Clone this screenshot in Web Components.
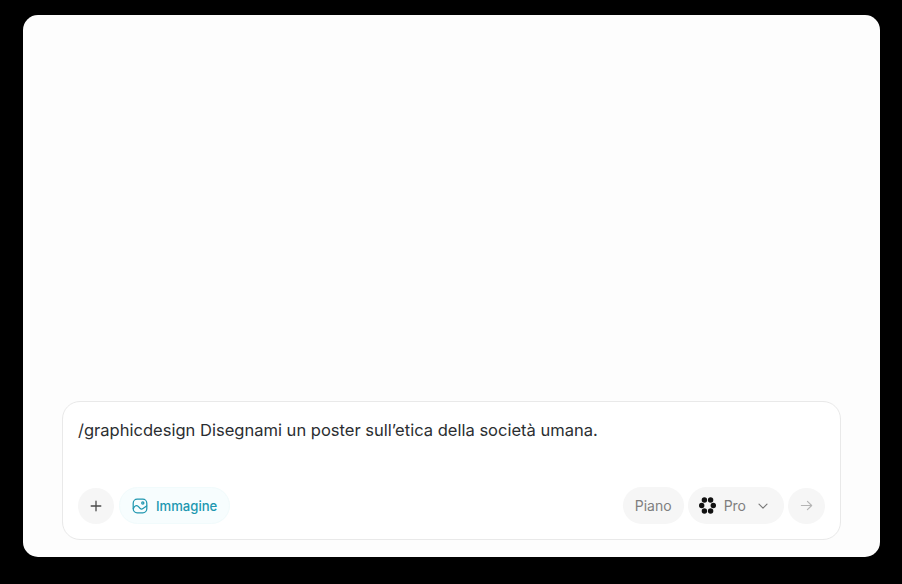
<!DOCTYPE html>
<html lang="it">
<head>
<meta charset="utf-8">
<title>Composer</title>
<style>
html,body{margin:0;height:100%;background:#000}
body{font-family:Inter,"Noto Sans",sans-serif}
</style>
</head>
<body>
<app-frame>
  <prompt-box>
    <span slot="text">/graphicdesign Disegnami un poster sull’etica della società umana.</span>
    <round-btn slot="left" style="--c:#4a4a4a"><svg viewBox="0 0 16 16" width="16" height="16" fill="none" stroke="currentColor" stroke-width="1.3" stroke-linecap="round"><path d="M8 3.2v9.6M3.2 8h9.6"/></svg></round-btn>
    <pill-btn slot="left" tone="accent">
      <svg slot="icon" viewBox="0 0 16 16" width="16" height="16" fill="none" stroke="currentColor" stroke-width="1.25" stroke-linecap="round" stroke-linejoin="round"><rect x="1.2" y="1.2" width="13.6" height="13.6" rx="4"/><circle cx="10.8" cy="5" r="1.1"/><path d="M1.4 10.6c1.4-3 3.2-3.8 4.8-2.2l1.8 1.9c1 1 2 1 3 .2l3.6-2.6"/></svg>
      Immagine
    </pill-btn>
    <pill-btn slot="right">Piano</pill-btn>
    <pill-btn slot="right" tone="menu">
      <svg slot="icon" viewBox="0 0 17 17" width="17" height="17" fill="#111"><circle cx="5.4" cy="3" r="2.7"/><circle cx="11.6" cy="3" r="2.7"/><circle cx="14.3" cy="8.5" r="2.7"/><circle cx="11.6" cy="14" r="2.7"/><circle cx="5.4" cy="14" r="2.7"/><circle cx="2.7" cy="8.5" r="2.7"/></svg>
      Pro
      <svg slot="end" viewBox="0 0 12 12" width="12" height="12" fill="none" stroke="#777" stroke-width="1.1" stroke-linecap="round" stroke-linejoin="round"><path d="M2 4.2 6 8.2l4-4"/></svg>
    </pill-btn>
    <round-btn slot="right" style="--c:#b4b4b4;--w:37px"><svg viewBox="0 0 16 16" width="15" height="15" fill="none" stroke="currentColor" stroke-width="1.2" stroke-linecap="round" stroke-linejoin="round"><path d="M2.5 8h11M9 3.5 13.5 8 9 12.5"/></svg></round-btn>
  </prompt-box>
</app-frame>
<script>
function def(name,css,html){
  customElements.define(name,class extends HTMLElement{
    constructor(){super();this.attachShadow({mode:'open'}).innerHTML='<style>'+css+'</style>'+html;}
  });
}
def('app-frame',`
:host{display:block;box-sizing:border-box;height:584px;padding:15px 22px 27px 23px}
.card{box-sizing:border-box;height:100%;background:#fdfdfd;border-radius:15px;padding:0 39px 17px;display:flex;flex-direction:column;justify-content:flex-end}
`,`<div class="card"><slot></slot></div>`);
def('prompt-box',`
:host{display:block;box-sizing:border-box;height:139px;background:#fff;border:1px solid #e9e9e9;border-radius:18px;padding:16px 15px 15px}
.wrap{height:100%;display:flex;flex-direction:column;justify-content:space-between}
.text{font-size:16.55px;line-height:24px;color:#2b2e31;white-space:nowrap}
.bar{display:flex;justify-content:space-between;align-items:center}
.side{display:flex;align-items:center;gap:4px}
.side:first-child{gap:5px}
`,`<div class="wrap"><div class="text"><slot name="text"></slot></div><div class="bar"><div class="side"><slot name="left"></slot></div><div class="side"><slot name="right"></slot></div></div></div>`);
def('round-btn',`
:host{display:flex;align-items:center;justify-content:center;width:var(--w,36px);height:36px;border-radius:50%;background:#f6f6f6;color:var(--c,#444)}
`,`<slot></slot>`);
def('pill-btn',`
:host{display:inline-flex;align-items:center;box-sizing:border-box;height:37px;padding:0 12px;border-radius:19px;background:#f6f6f6;color:#7f7f7f;font-size:14px;gap:8px}
:host([tone=accent]){background:#f7fdfe;color:#2097b0;padding:0 12px;border:1px solid #f1fbfc;font-size:13.1px;font-weight:500}
:host([tone=menu]){padding:0 15px 0 11px}
slot[name=icon],slot[name=end]{display:contents}
::slotted(svg){flex:none}
::slotted([slot=end]){margin-left:3px}
`,`<slot name="icon"></slot><span><slot></slot></span><slot name="end"></slot>`);
</script>
</body>
</html>
